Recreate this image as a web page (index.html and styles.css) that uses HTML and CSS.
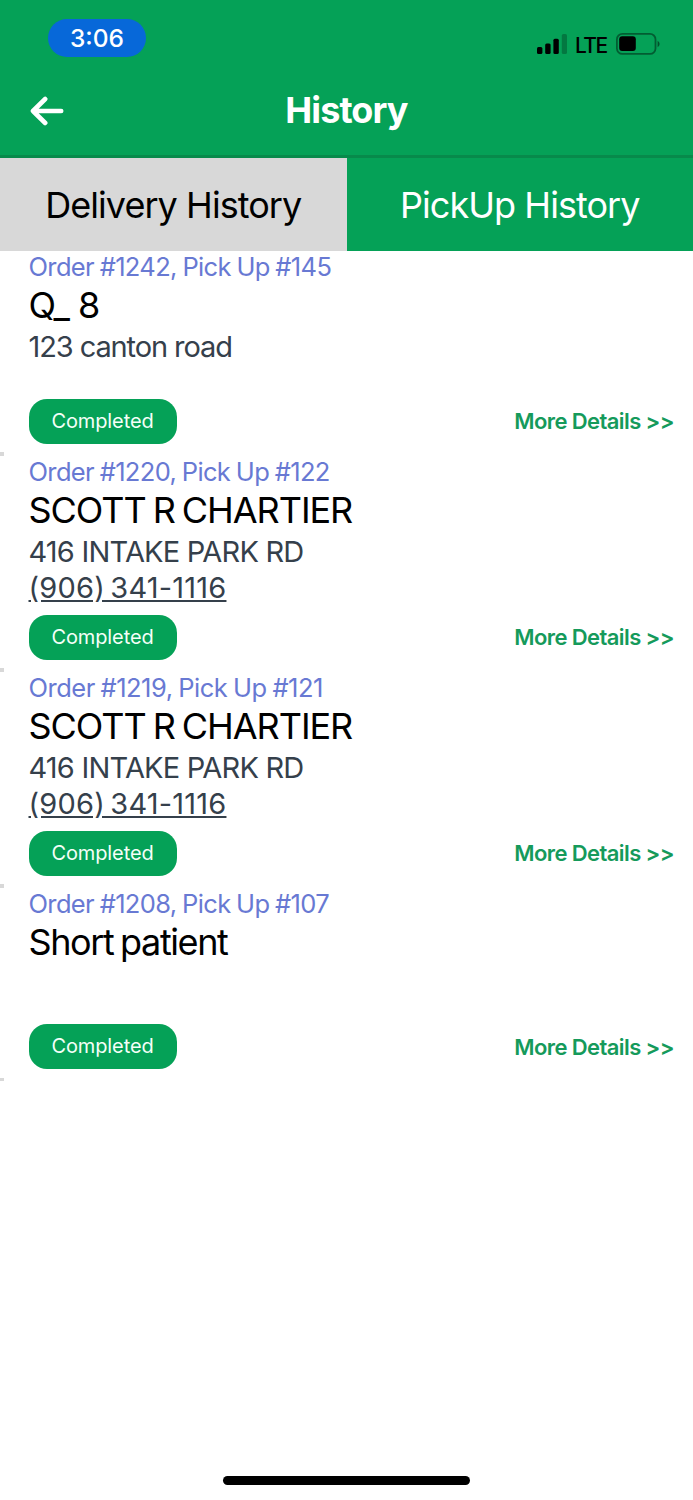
FILE: index.html
```html
<!DOCTYPE html>
<html lang="en">
<head>
  <meta charset="UTF-8">
  <title>History</title>
  <link rel="stylesheet" href="styles.css">
</head>
<body>

<header>
  <div class="status-bar">
    <div class="time">3:06</div>
    <div class="status-icons">
      <svg class="signal" width="30" height="20" viewBox="0 0 30 20">
        <rect x="0" y="13" width="5.4" height="7" rx="1.5"/>
        <rect x="8.2" y="9.5" width="5.4" height="10.5" rx="1.5"/>
        <rect x="16.4" y="4.8" width="5.4" height="15.2" rx="1.5"/>
        <rect x="24.8" y="0" width="5.2" height="20" rx="1.5" opacity="0.25"/>
      </svg>
      <span class="network">LTE</span>
      <svg class="battery" width="44" height="22" viewBox="0 0 44 22">
        <rect x="0.9" y="0.9" width="38.6" height="20" rx="5.5" fill="none" stroke="#000" stroke-width="1.8" opacity="0.42"/>
        <rect x="3.2" y="3.3" width="16.6" height="14.8" rx="3"/>
        <path d="M41.6 7.8 Q43.6 9 43.6 11 Q43.6 13 41.6 14.2 Z" opacity="0.5"/>
      </svg>
    </div>
  </div>
  <div class="title-bar">
    <svg class="back" width="34" height="30" viewBox="0 0 34 30">
      <path d="M31.2 15 H3 M15.2 3 L3 15 L15.2 27" fill="none" stroke="#fff" stroke-width="4.6" stroke-linecap="round" stroke-linejoin="round"/>
    </svg>
    <h1>History</h1>
  </div>
</header>

<nav class="tabs">
  <div class="tab active">Delivery History</div>
  <div class="tab">PickUp History</div>
</nav>

<main class="orders">
  <div class="order">
    <div class="info no-phone">
      <div class="number">Order #1242, Pick Up #145</div>
      <div class="name short">Q_ 8</div>
      <div class="address road">123 canton road</div>
    </div>
    <div class="actions">
      <span class="badge">Completed</span>
      <a class="details">More Details &gt;&gt;</a>
    </div>
  </div>

  <div class="order">
    <div class="info">
      <div class="number">Order #1220, Pick Up #122</div>
      <div class="name">SCOTT R CHARTIER</div>
      <div class="address">416 INTAKE PARK RD</div>
      <div class="phone">(906) 341-1116</div>
    </div>
    <div class="actions">
      <span class="badge">Completed</span>
      <a class="details">More Details &gt;&gt;</a>
    </div>
  </div>

  <div class="order">
    <div class="info">
      <div class="number wide">Order #1219, Pick Up #121</div>
      <div class="name">SCOTT R CHARTIER</div>
      <div class="address">416 INTAKE PARK RD</div>
      <div class="phone">(906) 341-1116</div>
    </div>
    <div class="actions">
      <span class="badge">Completed</span>
      <a class="details">More Details &gt;&gt;</a>
    </div>
  </div>

  <div class="order">
    <div class="info name-only">
      <div class="number">Order #1208, Pick Up #107</div>
      <div class="name patient">Short patient</div>
    </div>
    <div class="actions">
      <span class="badge">Completed</span>
      <a class="details">More Details &gt;&gt;</a>
    </div>
  </div>
</main>

<div class="home-indicator"></div>

</body>
</html>
```
FILE: styles.css
```css
* {
  box-sizing: border-box;
}

body {
  margin: 0;
  height: 1500px;
  display: flex;
  flex-direction: column;
  font-family: Inter, sans-serif;
  background: #fff;
  color: #000;
  white-space: nowrap;
  overflow: hidden;
}

header {
  height: 158px;
  background: #05a157;
  border-bottom: 3px solid #078a4b;
}

.status-bar {
  display: flex;
  justify-content: space-between;
  padding: 19px 33px 0 48px;
  height: 76px;
}

.time {
  width: 98px;
  height: 38px;
  border-radius: 19px;
  background: #0768d9;
  color: #fff;
  font-size: 24.5px;
  font-weight: 500;
  line-height: 39px;
  text-align: center;
}

.status-icons {
  display: flex;
  align-items: flex-start;
  padding-top: 14px;
}

.signal {
  margin-top: 1px;
}

.network {
  width: 33px;
  margin: 1px 8px 0 8px;
  font-size: 21px;
  font-weight: 500;
  line-height: 23px;
  letter-spacing: -1.6px;
}

.title-bar {
  display: grid;
  grid-template-columns: 34px 1fr 34px;
  align-items: center;
  padding: 0 30px;
  height: 70px;
}

h1 {
  margin: -2px 0 0;
  font-size: 36px;
  font-weight: 700;
  text-align: center;
  color: #fff;
  letter-spacing: -0.9px;
}

.tabs {
  display: flex;
  height: 92.5px;
}

.tab {
  flex: 1;
  display: flex;
  align-items: center;
  justify-content: center;
  padding-top: 2px;
  background: #05a157;
  color: #fff;
  font-size: 36px;
  letter-spacing: -0.95px;
}

.tab.active {
  background: #d8d8d8;
  color: #000;
}

.order {
  position: relative;
  padding: 0 19px 12.5px 28.5px;
}

/* short piece of the divider at the left edge */
.order::after {
  content: "";
  position: absolute;
  left: 0;
  bottom: 0;
  width: 4px;
  height: 3.5px;
  background: #d8d8d8;
}

.info {
  height: 159.2px;
}

.no-phone {
  height: 148px;
}

.name-only {
  height: 136.5px;
}

.number {
  font-size: 25.5px;
  line-height: 32px;
  color: #6879d3;
  letter-spacing: -0.65px;
  word-spacing: -0.9px;
}

.number.wide {
  letter-spacing: -0.5px;
}

.name {
  font-size: 36px;
  line-height: 44px;
  letter-spacing: -1.05px;
  word-spacing: -2px;
}

.name.short {
  word-spacing: 0;
}

.name.patient {
  letter-spacing: -1.4px;
}

.address {
  font-size: 29px;
  line-height: 39px;
  color: #35404b;
  letter-spacing: -0.8px;
}

.address.road {
  letter-spacing: -1.1px;
}

.phone {
  width: fit-content;
  font-size: 29px;
  line-height: 34px;
  color: #35404b;
  letter-spacing: 0.2px;
  word-spacing: -3px;
  text-decoration: underline;
}

.actions {
  display: flex;
  align-items: center;
  justify-content: space-between;
}

.badge {
  width: 148px;
  height: 45px;
  margin-bottom: -0.5px;
  border-radius: 18px;
  background: #05a157;
  color: #f4fff8;
  font-size: 20px;
  line-height: 45px;
  letter-spacing: -0.1px;
  text-align: center;
}

.details {
  font-size: 22px;
  font-weight: 600;
  color: #159a5b;
  letter-spacing: -0.6px;
}

.home-indicator {
  width: 247px;
  height: 9px;
  margin: auto auto 15px 223px;
  border-radius: 5px;
  background: #000;
}
```
